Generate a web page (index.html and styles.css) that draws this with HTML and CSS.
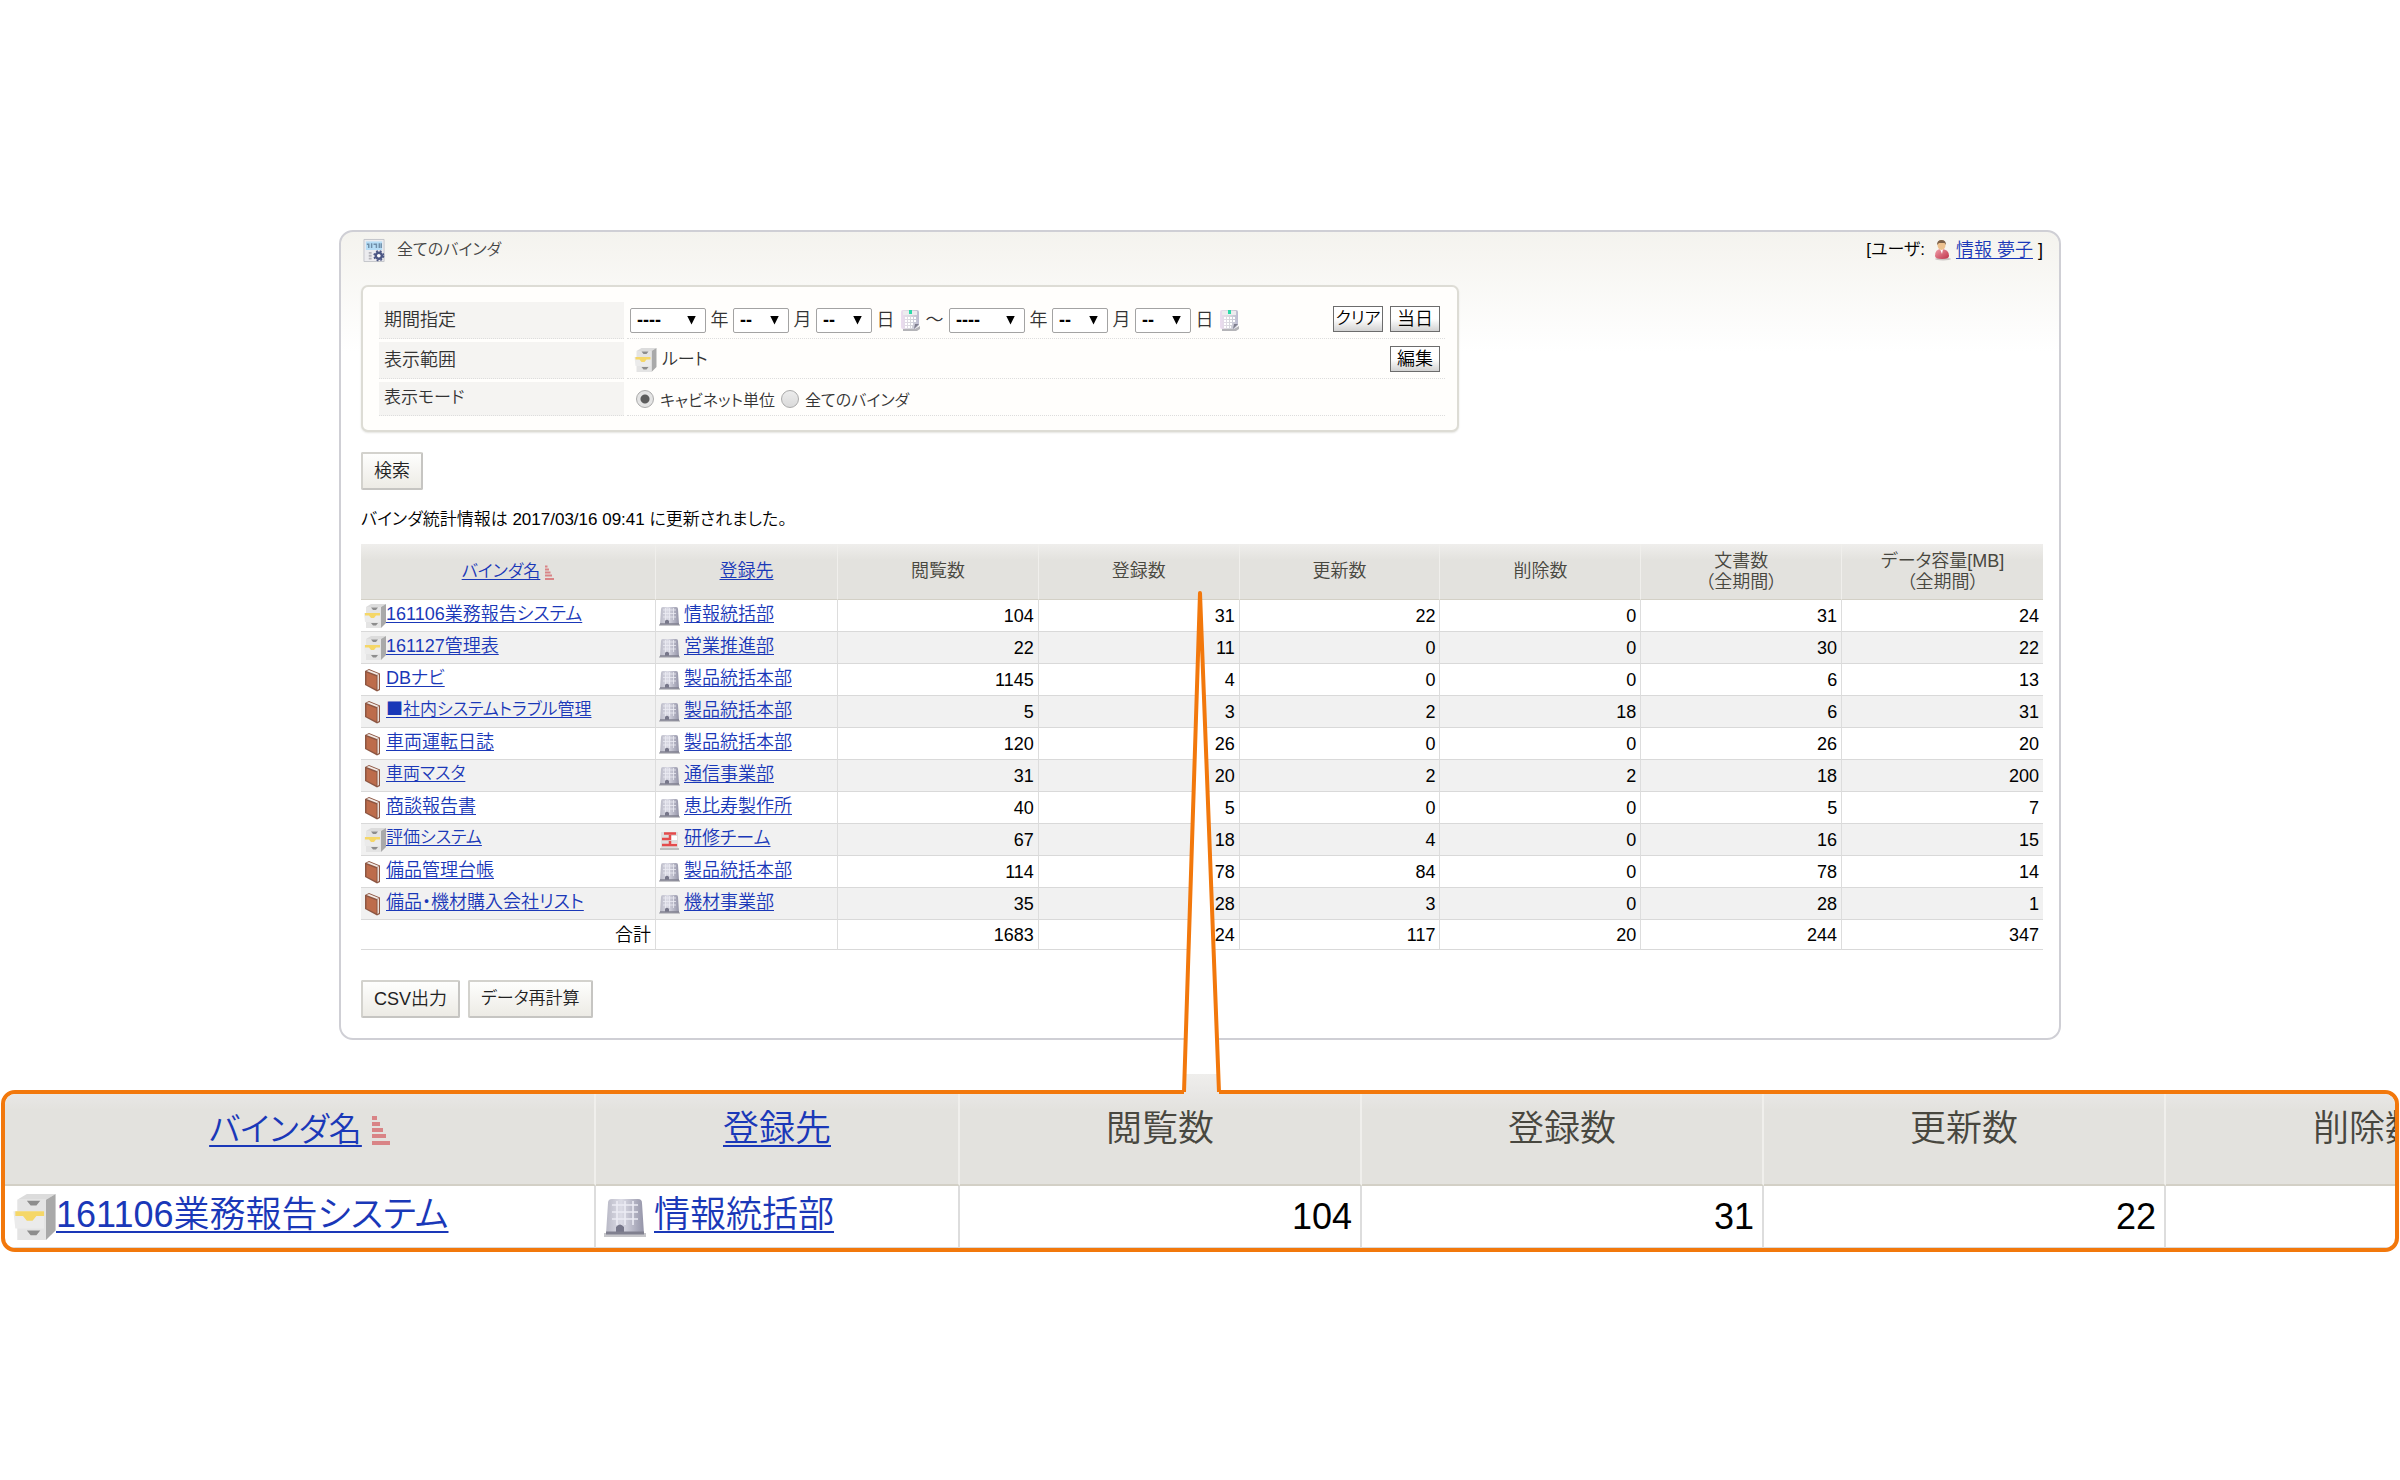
FILE: index.html
```
<!DOCTYPE html>
<html lang="ja">
<head>
<meta charset="utf-8">
<title>全てのバインダ</title>
<link rel="stylesheet" href="styles.css">
</head>
<body>
<svg class="sprite" aria-hidden="true">
  <defs>
    <linearGradient id="steel" x1="0" y1="0" x2="1" y2="0"><stop offset="0" stop-color="#b9b9c6"/><stop offset="0.4" stop-color="#dcdce6"/><stop offset="1" stop-color="#9494a8"/></linearGradient>
    <linearGradient id="sheet" x1="0" y1="0" x2="1" y2="0"><stop offset="0" stop-color="#ecdcf0"/><stop offset="0.5" stop-color="#d9d9de"/><stop offset="1" stop-color="#bcbcd0"/></linearGradient>
    <linearGradient id="coat" x1="0" y1="0" x2="1" y2="1"><stop offset="0" stop-color="#f0a0aa"/><stop offset="1" stop-color="#bf3048"/></linearGradient>
  </defs>
  <symbol id="cabinet" viewBox="0 0 22 24">
    <path d="M2 3 7 0H22L17 3Z" fill="#dcdcdc"/>
    <path d="M17 3 22 0V19L17 24Z" fill="#a9a9a9"/>
    <path d="M2 3H17V24H2Z" fill="#e4e4e4"/>
    <path d="M7 3.500h7l-2 2.500h-3zM7 19h7l-2 2.500h-3z" fill="#8d8d8d"/>
    <path d="M0 9H16V18H1Z" fill="#ebebeb"/>
    <path d="M1 9H16V11.500H12L10 14H7L5 11.500H1Z" fill="#f5d768"/>
  </symbol>
  <symbol id="binder" viewBox="0 0 17 24">
    <path d="M1 3 5 1 16 5.500V22L13 23.500 1 17Z" fill="#8d5743"/>
    <path d="M2.500 3 5 2 15 6 13 7Z" fill="#f3ece8"/>
    <path d="M13.500 7 15 6.300V21L13.500 22Z" fill="#e9ddd7"/>
    <path d="M2.500 4.500 12.500 8.500V21.500L2.500 16.500Z" fill="#bd6c4b"/>
  </symbol>
  <symbol id="building" viewBox="0 0 21 20">
    <path d="M0 18H21V20H0Z" fill="#c6c6ca"/>
    <path d="M2 3Q2 1 4 1H17Q19 1 19 3L20 18.500H1Z" fill="url(#steel)"/>
    <path d="M4 4H17M4 7.500H17M4 11H17M6.500 2V14M10.500 2V14M14.500 2V14" stroke="#ececf4" stroke-width="0.800" fill="none"/>
    <path d="M6 18V15Q8 12.500 10 15V18Z" fill="#77778a"/>
    <path d="M1 18H20" stroke="#80808f" stroke-width="1.500"/>
  </symbol>
  <symbol id="team" viewBox="0 0 21 20">
    <path d="M1 18H20V20H1Z" fill="#bdbdbd"/>
    <path d="M2 2H19V18H2Z" fill="#dedede"/>
    <path d="M12 6H18V10H12ZM12 13H18V16H12Z" fill="#fff"/>
    <path d="M5 3.500H17M3 9H11V5M3 15H11V11M11 15H18" stroke="#e44b4b" stroke-width="2.500" fill="none"/>
  </symbol>
  <symbol id="calendar" viewBox="0 0 20 22">
    <path d="M3 20H15L20 17V20L17 22H3Z" fill="#b4b4b8"/>
    <path d="M1 3Q1 1 3 1H17Q19 1 19 3V16L15 20H3Q1 20 1 18Z" fill="url(#sheet)"/>
    <path d="M3 2H17V6H3Z" fill="#ececee"/>
    <path d="M9 1H12V5H9Z" fill="#2cd9a8"/>
    <path d="M5 9H16M5 12H16M5 15H14M5 18H12" stroke="#fff" stroke-width="2" stroke-dasharray="2 1"/>
    <path d="M14 20 19 15H15Z" fill="#80808f"/>
  </symbol>
  <symbol id="user" viewBox="0 0 18 22">
    <ellipse cx="10" cy="20" rx="8" ry="1.500" fill="#cbc6c4"/>
    <path d="M2 17Q2 10 8 10Q16 10 16 17Q16 20 9 20Q2 20 2 17Z" fill="url(#coat)"/>
    <path d="M7 10H10L9 15Z" fill="#fff"/>
    <ellipse cx="8.500" cy="6" rx="4" ry="5" fill="#edc18e"/>
    <path d="M4 6Q4 1 8.500 1Q13 1 13 6L11.500 4H6Z" fill="#7c6149"/>
  </symbol>
  <symbol id="stats" viewBox="0 0 24 25">
    <path d="M1 1H22V24H1Z" fill="#ececef" stroke="#c2c4ca"/>
    <path d="M3 3H20V12H3Z" fill="#b6ddf6"/>
    <path d="M4 6H6V10M9 5V10M11 6H14V10M17 5V10M19 5V10" stroke="#6f8ea8" stroke-width="1.500" fill="none"/>
    <path d="M6 15H9M6 18H9M6 21H9" stroke="#b5b5bc" stroke-width="2"/>
    <circle cx="16.500" cy="18" r="3.200" fill="#fff" stroke="#4c5784" stroke-width="2.600"/>
    <circle cx="16.500" cy="18" r="5" fill="none" stroke="#4c5784" stroke-width="1.500" stroke-dasharray="2 2"/>
  </symbol>
  <symbol id="sort" viewBox="0 0 9 16">
    <path d="M0 1.500H2.500M0 4.500H4M0 7.500H5.500M0 10.500H7M0 14H9" stroke="#d98486" stroke-width="2"/>
  </symbol>
</svg>

<main class="panel">
  <header class="topbar">
    <h1 class="title"><svg class="title-icon"><use href="#stats"/></svg>全てのバインダ</h1>
    <div class="account"><span class="kana">[ユーザ:</span><svg class="user-icon"><use href="#user"/></svg><a href="#">情報 夢子</a>&nbsp;]</div>
  </header>

  <form class="filter" id="filter">
    <div class="row">
      <span class="label">期間指定</span>
      <div class="field">
        <span class="pick wide"><select aria-label="開始年"><option>----</option></select></span><span class="unit">年</span>
        <span class="pick"><select aria-label="開始月"><option>--</option></select></span><span class="unit">月</span>
        <span class="pick"><select aria-label="開始日"><option>--</option></select></span><span class="unit">日</span>
        <svg class="cal-icon"><use href="#calendar"/></svg><span class="tilde">～</span>
        <span class="pick wide"><select aria-label="終了年"><option>----</option></select></span><span class="unit">年</span>
        <span class="pick"><select aria-label="終了月"><option>--</option></select></span><span class="unit">月</span>
        <span class="pick"><select aria-label="終了日"><option>--</option></select></span><span class="unit">日</span>
        <svg class="cal-icon"><use href="#calendar"/></svg>
        <span class="actions"><button type="button" class="small kana">クリア</button><button type="button" class="small">当日</button></span>
      </div>
    </div>
    <div class="row">
      <span class="label">表示範囲</span>
      <div class="field">
        <svg class="root-icon"><use href="#cabinet"/></svg><span class="kana">ルート</span>
        <span class="actions"><button type="button" class="small">編集</button></span>
      </div>
    </div>
    <div class="row last">
      <span class="label kana">表示モード</span>
      <div class="field">
        <input type="radio" name="mode" id="mode-cabinet" checked><label for="mode-cabinet">キャビネット単位</label>
        <input type="radio" name="mode" id="mode-all"><label for="mode-all">全てのバインダ</label>
      </div>
    </div>
  </form>

  <button type="submit" form="filter" class="button">検索</button>
  <p class="status kana">バインダ統計情報は 2017/03/16 09:41 に更新されました。</p>

  <table class="stats">
    <colgroup><col class="col-name"><col class="col-place"><col span="6"></colgroup>
    <thead>
      <tr>
        <th><a href="#" class="kana">バインダ名</a><svg class="sort-icon"><use href="#sort"/></svg></th>
        <th><a href="#">登録先</a></th>
        <th>閲覧数</th><th>登録数</th><th>更新数</th><th>削除数</th>
        <th>文書数<br>（全期間）</th><th>データ容量[MB]<br>（全期間）</th>
      </tr>
    </thead>
    <tbody>
      <tr><td><span class="item"><svg><use href="#cabinet"/></svg><a href="#">161106業務報告システム</a></span></td><td><span class="place"><svg><use href="#building"/></svg><a href="#">情報統括部</a></span></td><td>104</td><td>31</td><td>22</td><td>0</td><td>31</td><td>24</td></tr>
      <tr><td><span class="item"><svg><use href="#cabinet"/></svg><a href="#">161127管理表</a></span></td><td><span class="place"><svg><use href="#building"/></svg><a href="#">営業推進部</a></span></td><td>22</td><td>11</td><td>0</td><td>0</td><td>30</td><td>22</td></tr>
      <tr><td><span class="item"><svg class="book"><use href="#binder"/></svg><a href="#">DBナビ</a></span></td><td><span class="place"><svg><use href="#building"/></svg><a href="#">製品統括本部</a></span></td><td>1145</td><td>4</td><td>0</td><td>0</td><td>6</td><td>13</td></tr>
      <tr><td><span class="item"><svg class="book"><use href="#binder"/></svg><a href="#" class="kana"><span class="mark">■</span>社内システムトラブル管理</a></span></td><td><span class="place"><svg><use href="#building"/></svg><a href="#">製品統括本部</a></span></td><td>5</td><td>3</td><td>2</td><td>18</td><td>6</td><td>31</td></tr>
      <tr><td><span class="item"><svg class="book"><use href="#binder"/></svg><a href="#">車両運転日誌</a></span></td><td><span class="place"><svg><use href="#building"/></svg><a href="#">製品統括本部</a></span></td><td>120</td><td>26</td><td>0</td><td>0</td><td>26</td><td>20</td></tr>
      <tr><td><span class="item"><svg class="book"><use href="#binder"/></svg><a href="#" class="kana">車両マスタ</a></span></td><td><span class="place"><svg><use href="#building"/></svg><a href="#">通信事業部</a></span></td><td>31</td><td>20</td><td>2</td><td>2</td><td>18</td><td>200</td></tr>
      <tr><td><span class="item"><svg class="book"><use href="#binder"/></svg><a href="#">商談報告書</a></span></td><td><span class="place"><svg><use href="#building"/></svg><a href="#">恵比寿製作所</a></span></td><td>40</td><td>5</td><td>0</td><td>0</td><td>5</td><td>7</td></tr>
      <tr><td><span class="item"><svg><use href="#cabinet"/></svg><a href="#" class="kana">評価システム</a></span></td><td><span class="place"><svg><use href="#team"/></svg><a href="#">研修チーム</a></span></td><td>67</td><td>18</td><td>4</td><td>0</td><td>16</td><td>15</td></tr>
      <tr><td><span class="item"><svg class="book"><use href="#binder"/></svg><a href="#">備品管理台帳</a></span></td><td><span class="place"><svg><use href="#building"/></svg><a href="#">製品統括本部</a></span></td><td>114</td><td>78</td><td>84</td><td>0</td><td>78</td><td>14</td></tr>
      <tr><td><span class="item"><svg class="book"><use href="#binder"/></svg><a href="#">備品・機材購入会社リスト</a></span></td><td><span class="place"><svg><use href="#building"/></svg><a href="#">機材事業部</a></span></td><td>35</td><td>28</td><td>3</td><td>0</td><td>28</td><td>1</td></tr>
    </tbody>
    <tfoot>
      <tr><td>合計</td><td></td><td>1683</td><td>24</td><td>117</td><td>20</td><td>244</td><td>347</td></tr>
    </tfoot>
  </table>

  <div class="tools">
    <button type="button" class="button">CSV出力</button>
    <button type="button" class="button kana">データ再計算</button>
  </div>
</main>

<section class="callout">
  <div class="lens">
    <table class="stats large">
      <colgroup><col class="col-name"><col class="col-place"><col span="4" class="col-count"></colgroup>
      <thead>
        <tr><th><a href="#" class="kana">バインダ名</a><svg class="sort-icon"><use href="#sort"/></svg></th><th><a href="#">登録先</a></th><th>閲覧数</th><th>登録数</th><th>更新数</th><th>削除数</th></tr>
      </thead>
      <tbody>
        <tr><td><span class="item"><svg><use href="#cabinet"/></svg><a href="#">161106業務報告システム</a></span></td><td><span class="place"><svg><use href="#building"/></svg><a href="#">情報統括部</a></span></td><td>104</td><td>31</td><td>22</td><td></td></tr>
      </tbody>
    </table>
  </div>
  <svg class="pointer" viewBox="0 0 44 504" aria-hidden="true">
    <defs><linearGradient id="fade" x1="0" y1="0" x2="0" y2="1"><stop offset="0" stop-color="#efeeec"/><stop offset="1" stop-color="#e8e7e5"/></linearGradient></defs>
    <path d="M22 2 6 504H41Z" fill="#fff"/>
    <path d="M7 484H40L41 504H6Z" fill="url(#fade)"/>
    <path d="M6 502 22 3 41 502" fill="none" stroke="#f2780c" stroke-width="4" stroke-linejoin="round"/>
  </svg>
</section>
</body>
</html>
```
FILE: styles.css
```
* { box-sizing: border-box; }

body {
  margin: 0;
  padding: 230px 1px;
  background: #fff;
  color: #000;
  font: 350 18px/24px "Liberation Sans", "Noto Sans CJK JP", sans-serif;
  font-feature-settings: "palt";
}

a { color: #1a38b8; text-decoration: underline; text-underline-offset: 2px; }
button, select { font: inherit; font-feature-settings: inherit; }
svg { display: block; flex: none; }
.sprite { position: absolute; width: 0; height: 0; }
.kana { font-size: 17px; }

.panel {
  max-width: 1722px;
  margin: 0 auto;
  padding: 0 16px 20px 20px;
  border: 2px solid #cfcfd5;
  border-radius: 14px;
  background: linear-gradient(#f4f3ee, #fff 120px);
}

.topbar {
  display: flex;
  justify-content: space-between;
  align-items: center;
  height: 36px;
  margin-bottom: 17px;
}
.title {
  display: flex;
  align-items: center;
  gap: 11px;
  margin: 0 0 0 2px;
  color: #444;
  font-size: 16px;
  font-weight: 350;
}
.title-icon { width: 23px; height: 25px; }
.account { display: flex; align-items: center; }
.user-icon { width: 18px; height: 22px; margin: 0 5px 0 8px; }

.filter {
  max-width: 1098px;
  padding: 15px 12px 14px 16px;
  border: 2px solid #dddcd5;
  border-radius: 7px;
  background: #fffefc;
  box-shadow: 0 1px 2px #e4e4e0;
}
.row { display: flex; gap: 3px; height: 37px; margin-bottom: 3px; color: #333; }
.row.last { height: 34px; margin-bottom: 0; }
.label {
  width: 245px;
  padding: 0 5px;
  border-bottom: 1px dotted #ddd;
  background: #f5f4f2;
  line-height: 36px;
}
.last .label { line-height: 32px; }
.field {
  display: flex;
  flex: 1;
  align-items: center;
  padding: 0 5px 0 3px;
  border-bottom: 1px dotted #ddd;
}
.pick { position: relative; width: 56px; height: 25px; }
.pick.wide { width: 76px; }
.pick select {
  width: 100%;
  height: 100%;
  padding: 0 6px;
  border: 1px solid #a3a3a3;
  border-radius: 2px;
  background: #fff;
  color: #000;
  font-weight: 700;
  line-height: 20px;
  appearance: none;
}
.pick::after {
  content: "";
  position: absolute;
  top: 8px;
  right: 10px;
  width: 9px;
  height: 9px;
  background: #000;
  clip-path: polygon(0 0, 100% 0, 50% 100%);
  pointer-events: none;
}
.unit { width: 27px; text-align: center; }
.cal-icon { width: 20px; height: 22px; margin-left: 1px; }
.tilde { width: 29px; text-align: center; }
.actions { display: flex; gap: 7px; margin-left: auto; padding-bottom: 2px; }
.small {
  width: 50px;
  height: 26px;
  padding: 0;
  border: 1px solid #6c6c6c;
  background: linear-gradient(#fff 50%, #d2d2d2);
  color: #000;
  line-height: 22px;
}
.root-icon { width: 23px; height: 24px; margin: 0 5px 0 4px; }
.field input {
  width: 18px;
  height: 18px;
  margin: 0 6px;
  border: 1px solid #aaa;
  border-radius: 50%;
  background: linear-gradient(#ececec, #dadada);
  appearance: none;
}
.field input:checked { background: radial-gradient(circle, #5c5c5c 4px, #e4e4e4 5px); }
.field label { padding-top: 4px; font-size: 16px; }

.button {
  display: block;
  height: 38px;
  padding: 0 11px 1px;
  border: 2px solid #d3d2cd;
  border-right-color: #c6c5c2;
  border-bottom-color: #c6c5c2;
  border-radius: 2px;
  background: linear-gradient(#fefefd, #edebe5);
  color: #222;
}
.filter + .button { margin-top: 20px; }
.status { margin: 18px 0 12px; }

.stats { width: 100%; border-collapse: separate; border-spacing: 0; table-layout: fixed; }
.col-name { width: 295px; }
.col-place { width: 182px; }
.stats th {
  height: 56px;
  padding: 0;
  border-right: 1px solid #f0efec;
  border-bottom: 1px solid #d3d0c6;
  background: linear-gradient(#efeeec, #e3e2de 16px);
  color: #48473f;
  font-weight: 350;
  line-height: 21px;
}
.stats td {
  height: 32px;
  padding: 0 4px 0 3px;
  border-right: 1px solid #ddd;
  border-bottom: 1px solid #d9d9d9;
  text-align: right;
}
.stats th:last-child, .stats td:last-child { border-right: 0; }
.stats tbody tr:nth-child(even) { background: #f1f1f1; }
.stats tfoot td { height: 30px; }
.sort-icon { display: inline-block; width: 9px; height: 16px; margin-left: 5px; vertical-align: -4px; }
.item, .place { display: flex; align-items: center; white-space: nowrap; }
.item a, .place a { padding-bottom: 3px; }
.item svg { width: 22px; height: 24px; }
.item .book { width: 17px; margin-right: 5px; }
.place { gap: 4px; }
.place svg { width: 21px; height: 20px; }
.mark { font-family: "Noto Sans CJK JP", sans-serif; line-height: 20px; }

.tools { display: flex; gap: 8px; margin-top: 30px; }

.callout { position: relative; margin-top: 50px; }
.lens { overflow: hidden; border: 4px solid #f2780c; border-radius: 14px; background: #fff; }
.large { width: 2562px; font-size: 36px; line-height: 48px; }
.large .kana { font-size: 33px; }
.large .col-name { width: 591px; }
.large .col-place { width: 364px; }
.large .col-count { width: 402px; }
.large th {
  height: 92px;
  padding-bottom: 20px;
  border-right-width: 2px;
  border-bottom-width: 2px;
  background: linear-gradient(#e8e7e5, #e3e2de 16px);
  line-height: 48px;
}
.large td { height: 62px; padding: 0 8px; border-right-width: 2px; border-bottom-width: 1px; }
.large a { text-decoration-thickness: 2px; text-underline-offset: 4px; }
.large .sort-icon { width: 18px; height: 32px; margin-left: 10px; vertical-align: -6px; }
.large .item svg { width: 43px; height: 46px; }
.large .place { gap: 8px; }
.large .place svg { width: 42px; height: 40px; }
.pointer { position: absolute; top: -500px; left: calc(50% - 22px); width: 44px; height: 504px; }
```
